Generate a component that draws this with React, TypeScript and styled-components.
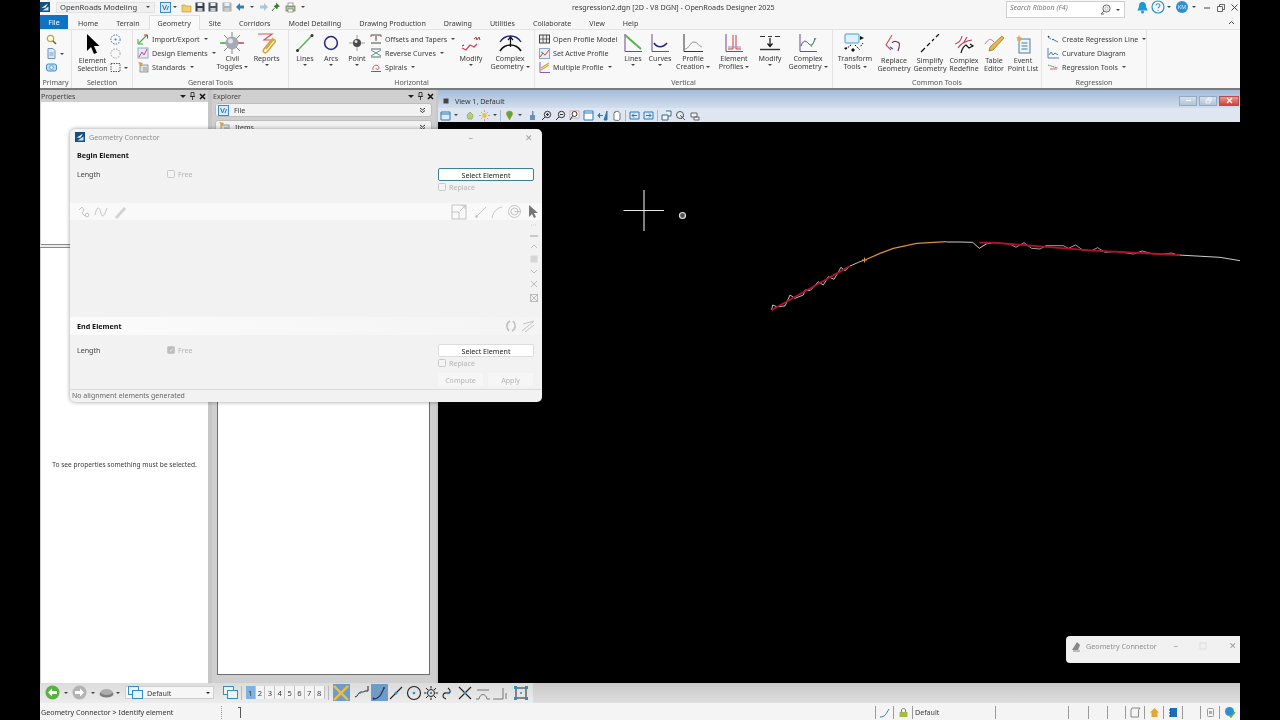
import React from "react";
import styled, { createGlobalStyle } from "styled-components";

const GlobalStyle = createGlobalStyle`
  html, body { margin: 0; padding: 0; background: #000; }
  body { font-family: "Noto Sans", "Liberation Sans", sans-serif; font-size: 7.1px; color: #3a3a3a; }
  * { box-sizing: border-box; }
`;

const Screen = styled.div`
  width: 1280px;
  height: 720px;
  background: #000;
  padding-left: 40px;
  position: relative;
  overflow: hidden;
  filter: blur(0.25px);
`;
const AppWindow = styled.div`
  width: 1200px;
  height: 720px;
  display: flex;
  flex-direction: column;
  background: #f6f6f6;
`;

// icons are drawn in page pixels: viewBox always equals the size
type IcoProps = { $s: number; $h?: number; $ml?: number; $flip?: boolean };
const Ico = styled.svg.attrs<IcoProps>((p) => ({
  viewBox: `0 0 ${p.$s} ${p.$h ?? p.$s}`,
}))<IcoProps>`
  width: ${(p) => p.$s}px;
  height: ${(p) => p.$h ?? p.$s}px;
  flex: none;
  display: block;
  margin-left: ${(p) => p.$ml ?? 0}px;
  transform: ${(p) => (p.$flip ? "scaleX(-1)" : "none")};
`;
const Caret = styled.span<{ $c?: string; $mx?: number; $big?: boolean }>`
  display: inline-block;
  flex: none;
  width: 0;
  height: 0;
  vertical-align: middle;
  margin: 0 ${(p) => p.$mx ?? 0}px;
  border-left: ${(p) => (p.$big ? 3 : 2)}px solid transparent;
  border-right: ${(p) => (p.$big ? 3 : 2)}px solid transparent;
  border-top: ${(p) => (p.$big ? 3 : 2.5)}px solid ${(p) => p.$c ?? "#444"};
`;

/* title bar */
const TitleBar = styled.div`
  height: 14px;
  display: grid;
  grid-template-columns: 532px 1fr auto;
  position: relative;
  z-index: 1;
`;
const QuickAccess = styled.div`
  display: flex;
  align-items: center;
  height: 14px;
`;
const WorkflowSelect = styled.div`
  width: 99px;
  height: 11px;
  margin: 0 3px 0 6px;
  padding: 0 4px 0 3px;
  background: #f0f0f0;
  border: 1px solid #e2e2e2;
  display: flex;
  align-items: center;
  justify-content: space-between;
  font-size: 7.6px;
`;
const QuickSlot = styled.span<{ $w: number }>`
  width: ${(p) => p.$w}px;
  display: flex;
  justify-content: center;
  align-items: center;
`;
const DocTitle = styled.div`
  font-size: 7.2px;
  line-height: 14px;
  white-space: nowrap;
`;
const TitleRight = styled.div`
  display: flex;
  align-items: flex-start;
  width: 234px;
`;
const SearchBox = styled.div`
  width: 119px;
  height: 17px;
  margin-top: 1px;
  background: #fff;
  border: 1px solid #cfcfcf;
  display: flex;
  align-items: flex-start;
  font-style: italic;
  color: #777;
  padding: 1px 0 0 3px;
  font-size: 7px;
  justify-content: space-between;
`;
const SearchTail = styled.span`
  display: flex;
  align-items: center;
  gap: 5px;
  padding-right: 4px;
  height: 13px;
`;
const TopIconRow = styled.div`
  display: flex;
  align-items: center;
  height: 14px;
  margin-left: 11px;
  gap: 2px;
`;
const Avatar = styled.span`
  width: 12px;
  height: 12px;
  margin: 0 2px 0 3px;
  border-radius: 50%;
  background: #2f8fd0;
  color: #d8eefa;
  font-size: 5.5px;
  display: flex;
  align-items: center;
  justify-content: center;
`;

/* tabs */
const TabRow = styled.div`
  height: 16px;
  display: flex;
  align-items: stretch;
  padding-top: 1px;
  border-bottom: 1px solid #e4e4e4;
`;
const FileTab = styled.div`
  width: 28px;
  margin-right: 1px;
  background: #0f72c4;
  color: #fff;
  display: flex;
  align-items: center;
  justify-content: center;
`;
const Tab = styled.div<{ $active?: boolean }>`
  padding: 0 8px;
  display: flex;
  align-items: center;
  white-space: nowrap;
  background: ${(p) => (p.$active ? "#f9f9f9" : "transparent")};
  border: 1px solid ${(p) => (p.$active ? "#e0e0e0" : "transparent")};
  border-bottom: none;
  margin-bottom: ${(p) => (p.$active ? "-1px" : "0")};
`;
const Collapse = styled.div`
  margin-left: auto;
  padding-right: 5px;
  display: flex;
  align-items: center;
`;

/* ribbon */
const Ribbon = styled.div`
  height: 60px;
  display: flex;
  background: #f8f8f8;
  border-bottom: 2px solid #7b7b7b;
`;
const Group = styled.section<{ $w: number }>`
  width: ${(p) => p.$w}px;
  display: flex;
  flex-direction: column;
  border-right: 1px solid #e3e3e3;
`;
const GroupBody = styled.div<{ $pad?: number }>`
  flex: 1;
  display: flex;
  padding: 2px 0 0 ${(p) => p.$pad ?? 0}px;
  min-height: 0;
`;
const GroupLabel = styled.div`
  height: 11px;
  line-height: 10px;
  text-align: center;
  color: #555;
`;
const LargeTool = styled.div<{ $w: number }>`
  width: ${(p) => p.$w}px;
  display: flex;
  flex-direction: column;
  align-items: center;
  white-space: nowrap;
`;
const ToolIcon = styled.div<{ $h?: number }>`
  height: ${(p) => p.$h ?? 22}px;
  display: flex;
  align-items: center;
  justify-content: center;
`;
const ToolLabel = styled.div`
  text-align: center;
  line-height: 8px;
`;
const ToolCaret = styled.div`
  height: 6px;
  display: flex;
  align-items: center;
`;
const SmallList = styled.div<{ $w: number }>`
  width: ${(p) => p.$w}px;
  display: flex;
  flex-direction: column;
`;
const SmallRow = styled.div`
  height: 14px;
  display: flex;
  align-items: center;
  gap: 3px;
  white-space: nowrap;
`;
const RowText = styled.span`
  margin-right: 1px;
`;
const IconStack = styled.div<{ $w: number }>`
  width: ${(p) => p.$w}px;
  display: flex;
  flex-direction: column;
  align-items: flex-start;
  gap: 3px;
  padding-top: 2px;
`;
const StackRow = styled.div`
  height: 11px;
  display: flex;
  align-items: center;
  gap: 3px;
`;

/* docked panels */
const Main = styled.div`
  flex: 1;
  display: flex;
  min-height: 0;
  background: #c6c6c6;
`;
const Panel = styled.div<{ $w: number }>`
  width: ${(p) => p.$w}px;
  display: flex;
  flex-direction: column;
  background: #cfcfcf;
  margin-right: ${(p) => (p.$w > 200 ? 2 : 4)}px;
`;
const PanelHead = styled.div`
  height: 12px;
  flex: none;
  display: flex;
  align-items: center;
  justify-content: space-between;
  padding: 0 2px 0 1px;
  color: #444;
`;
const PanelTools = styled.div`
  display: flex;
  align-items: center;
  gap: 4px;
`;
const PropTop = styled.div`
  height: 143px;
  flex: none;
  margin-left: 1px;
  background: #fff;
  border-bottom: 1px solid #8a8a8a;
`;
const PropSplit = styled.div`
  height: 3px;
  flex: none;
  background: #ececec;
  border-bottom: 1px solid #8a8a8a;
`;
const PropBody = styled.div`
  flex: 1;
  margin-left: 1px;
  background: #fff;
  display: flex;
  align-items: center;
  justify-content: center;
  padding-bottom: 2px;
  font-size: 6.6px;
`;
const ExplorerBody = styled.div`
  flex: 1;
  display: flex;
  flex-direction: column;
  gap: 3px;
  padding: 1px 4px 0 3px;
  min-height: 0;
`;
const Accordion = styled.div`
  height: 14px;
  flex: none;
  background: #f2f2f2;
  border: 1px solid #bdbdbd;
  border-radius: 3px;
  display: flex;
  align-items: center;
  gap: 5px;
  padding: 0 5px 0 2px;
`;
const Grow = styled.span`
  flex: 1;
`;
const ExplorerList = styled.div`
  flex: 1;
  margin: 0 2px 8px;
  background: #fff;
  border: 1px solid #6d6d6d;
`;

/* view window */
const ViewWin = styled.div`
  flex: 1;
  display: flex;
  flex-direction: column;
  min-width: 0;
`;
const ViewTitle = styled.div`
  height: 18px;
  flex: none;
  padding: 3px 1px 0 5px;
  display: flex;
  align-items: center;
  gap: 6px;
  background: linear-gradient(#a3bcd9, #d2deed);
  color: #333;
`;
const ViewButtons = styled.div`
  margin-left: auto;
  display: flex;
  gap: 2px;
`;
const WinBtn = styled.span<{ $red?: boolean }>`
  width: ${(p) => (p.$red ? 20 : 18)}px;
  height: 10px;
  border: 1px solid ${(p) => (p.$red ? "#b05050" : "#93a9c2")};
  background: ${(p) => (p.$red ? "linear-gradient(#e89a90,#c9433a)" : "linear-gradient(#d5e0ec,#b2c4d8)")};
  display: flex;
  align-items: center;
  justify-content: center;
`;
const ViewTools = styled.div`
  height: 14px;
  flex: none;
  display: flex;
  align-items: center;
  gap: 3px;
  padding-left: 2px;
  background: #dde6f1;
`;
const ToolSep = styled.span`
  width: 1px;
  height: 11px;
  background: #a9b6c6;
`;
const Canvas = styled.div`
  flex: 1;
  background: #000;
  min-height: 0;
`;
const CanvasLayer = styled.svg`
  display: block;
  width: 802px;
  height: 560px;
`;

/* bottom */
const BottomBar = styled.div`
  height: 20px;
  flex: none;
  display: flex;
  align-items: center;
  background: linear-gradient(#c9c9c9, #dedede);
`;
const BottomStrip = styled.div`
  width: 493px;
  height: 20px;
  display: flex;
  align-items: center;
  padding: 0 0 1px 5px;
  background: linear-gradient(#dcdcdc, #ececec);
`;
const ModelSelect = styled.div`
  width: 90px;
  height: 13px;
  margin: 0 9px 0 3px;
  padding: 0 3px 0 2px;
  background: #f6f6f6;
  border: 1px solid #cfcfcf;
  display: flex;
  align-items: center;
  gap: 4px;
`;
const ViewNumber = styled.span<{ $on?: boolean }>`
  width: 10px;
  height: 13px;
  display: flex;
  align-items: center;
  justify-content: center;
  font-size: 7.6px;
  background: ${(p) => (p.$on ? "#7fb2de" : "#f4f4f4")};
  border-right: 1px solid #c2c2c2;
`;
const SnapBtn = styled.span<{ $on?: boolean; $w?: number; $ml?: number }>`
  width: ${(p) => p.$w ?? 17.5}px;
  height: 17px;
  margin-left: ${(p) => p.$ml ?? 0}px;
  display: flex;
  align-items: center;
  justify-content: center;
  background: ${(p) => (p.$on ? "#6f9cc6" : "transparent")};
`;
const StripSep = styled.span`
  width: 1px;
  height: 14px;
  background: #b9b9b9;
  margin: 0 4px 0 3px;
`;
const StatusBar = styled.div`
  height: 17px;
  flex: none;
  display: flex;
  align-items: center;
  background: #f4f4f4;
  padding: 1px 0 0 1px;
  font-size: 7.1px;
`;
const StatusMsg = styled.div`
  width: 181px;
  height: 13px;
  display: flex;
  align-items: center;
  border-right: 1px dotted #999;
  color: #333;
  white-space: nowrap;
`;
const StatusPrompt = styled.div`
  margin-left: 16px;
  width: 3px;
  height: 11px;
  border-right: 1px solid #555;
  border-top: 1px solid #555;
`;
const StatusCells = styled.div`
  margin-left: auto;
  display: flex;
  height: 13px;
`;
const StatusCell = styled.div<{ $w: number }>`
  width: ${(p) => p.$w}px;
  border-left: 1px solid #9a9a9a;
  display: flex;
  align-items: center;
  padding-left: ${(p) => (p.$w > 60 ? 2 : 0)}px;
  justify-content: ${(p) => (p.$w > 60 ? "flex-start" : "center")};
`;

/* floating dialog */
const Dialog = styled.div`
  position: absolute;
  left: 70px;
  top: 129px;
  width: 472px;
  height: 273px;
  background: #f2f2f3;
  border-radius: 5px;
  box-shadow: 0 0 4px rgba(0, 0, 0, 0.4);
  display: flex;
  flex-direction: column;
  overflow: hidden;
`;
const DialogTitle = styled.div`
  height: 18px;
  flex: none;
  display: flex;
  align-items: center;
  padding: 0 9px 2px 5px;
  gap: 4px;
  color: #8d8d8d;
  font-size: 7.2px;
`;
const DialogWinBtn = styled.span<{ $gap?: number }>`
  color: #9b9b9b;
  font-size: 9px;
  margin-left: ${(p) => p.$gap ?? 0}px;
`;
const SectionHead = styled.div<{ $band?: boolean; $h: number }>`
  height: ${(p) => p.$h}px;
  flex: none;
  display: flex;
  align-items: center;
  padding: 0 7px;
  font-weight: 700;
  font-size: 7.2px;
  color: #111;
  background: ${(p) => (p.$band ? "linear-gradient(90deg,#fbfbfb,#f4f4f5)" : "transparent")};
`;
const HeadIcons = styled.div`
  margin-left: auto;
  display: flex;
  align-items: center;
  gap: 3px;
`;
const FieldGrid = styled.div<{ $h: number; $top: number }>`
  height: ${(p) => p.$h}px;
  flex: none;
  display: grid;
  grid-template-columns: 90px 1fr 96px;
  padding: ${(p) => p.$top}px 8px 0 7px;
  align-content: start;
`;
const FieldLabel = styled.span`
  line-height: 10px;
  color: #444;
`;
const Check = styled.label`
  display: flex;
  align-items: flex-start;
  gap: 3px;
  color: #b4b4b4;
  line-height: 9px;
  height: 10px;
  margin-top: 1px;
`;
const CheckBox = styled.span<{ $on?: boolean }>`
  width: 8px;
  height: 8px;
  flex: none;
  border: 1px solid #c8c8c8;
  border-radius: 1.5px;
  background: ${(p) => (p.$on ? "#bdbdbd" : "#f4f4f4")};
  color: #eee;
  font-size: 6px;
  line-height: 6px;
  text-align: center;
`;
const RightCol = styled.div`
  display: flex;
  flex-direction: column;
  gap: 1px;
  margin-top: -1px;
`;
const SelectBtn = styled.button<{ $focus?: boolean }>`
  width: 96px;
  height: 13px;
  padding: 0;
  font: inherit;
  color: #222;
  background: #fff;
  border: 1px solid ${(p) => (p.$focus ? "#3f7f92" : "#dcdcdc")};
  border-radius: 2px;
`;
const ActionRow = styled.div`
  display: flex;
  gap: 5px;
  margin-top: 3px;
`;
const GhostBtn = styled.span`
  width: 45px;
  height: 13px;
  background: #f6f6f6;
  color: #b5b5b5;
  display: flex;
  align-items: center;
  justify-content: center;
`;
const ToolBand = styled.div`
  height: 17px;
  flex: none;
  display: flex;
  align-items: center;
  padding: 0 4px 0 8px;
  background: #f9f9f9;
`;
const ListArea = styled.div`
  flex: 1;
  display: flex;
  justify-content: flex-end;
  padding: 2px 3px 0 0;
`;
const SideIcons = styled.div`
  width: 11px;
  display: flex;
  flex-direction: column;
  align-items: center;
  gap: 6px;
`;
const DialogStatus = styled.div`
  height: 13px;
  flex: none;
  border-top: 1px solid #dcdcdc;
  padding-left: 2px;
  line-height: 12px;
  color: #666;
  font-size: 7px;
`;
const TaskPreview = styled.div`
  position: absolute;
  left: 1066px;
  top: 636px;
  width: 174px;
  height: 27px;
  background: #f1f1f1;
  border-radius: 4px 0 0 4px;
  display: flex;
  align-items: center;
  gap: 4px;
  padding: 0 3px 8px 4px;
  color: #8f8f8f;
  font-size: 7.2px;
`;

/* ---- icons ---- */
const AppLogo = () => (
  <Ico $s={10}>
    <rect width="10" height="10" fill="#12517f" />
    <path d="M1.500 6L8 1.500 5.500 5.500z" fill="#fff" />
    <path d="M2.500 8.500L8.500 4.500v4z" fill="#cfe3f2" />
  </Ico>
);
const CubeIcon = () => (
  <Ico $s={11}>
    <rect x=".5" y=".5" width="10" height="10" fill="#dcebf7" stroke="#3b8ccb" />
    <path d="M2.500 3l2 5 2-5M7 8l1.500-4" stroke="#2f78b5" fill="none" />
  </Ico>
);
const FolderIcon = () => (
  <Ico $s={11}>
    <path d="M1 3h3l1 1h5v6H1z" fill="#f1cf6a" stroke="#b8912e" strokeWidth=".6" />
  </Ico>
);
const SaveIcon = ({ c = "#2c3e50" }: { c?: string }) => (
  <Ico $s={10}>
    <path d="M.5.5h8l1 1v8H.5z" fill={c} />
    <rect x="2.500" y="1" width="5" height="3" fill="#eee" />
    <rect x="2.500" y="6" width="5" height="3.500" fill="#ccc" />
  </Ico>
);
const UndoIcon = ({ c, flip }: { c: string; flip?: boolean }) => (
  <Ico $s={10} $flip={flip}>
    <path d="M1 5l4-4v2.500h4v3H5V9z" fill={c} />
  </Ico>
);
const PinIcon = () => (
  <Ico $s={10}>
    <path d="M5 .5l4 4-2 .5-1 2.500L2.500 4 5 3z" fill="#3d7a35" />
    <path d="M3.500 6L1 9" stroke="#3d7a35" />
  </Ico>
);
const PrintIcon = () => (
  <Ico $s={11}>
    <rect x="1" y="4" width="9" height="5" fill="#b9c9a0" stroke="#5f6f4b" strokeWidth=".7" />
    <rect x="3" y="1" width="5" height="3" fill="#fff" stroke="#666" strokeWidth=".6" />
    <rect x="3" y="7" width="5" height="3" fill="#fff" stroke="#666" strokeWidth=".6" />
  </Ico>
);
const BellIcon = () => (
  <Ico $s={13}>
    <path d="M6.500 1c3 0 3.600 2.500 3.600 5l1.600 3.500H1.300L2.900 6c0-2.500.6-5 3.600-5z" fill="#1c9ad6" />
    <circle cx="6.500" cy="11" r="1.500" fill="#1c9ad6" />
  </Ico>
);
const HelpIcon = () => (
  <Ico $s={14}>
    <circle cx="7" cy="7" r="6" fill="#fff" stroke="#2f8fd0" strokeWidth="1.200" />
    <path d="M5 5.500c0-2.400 4-2.400 4 0 0 1.600-2 1.500-2 3M7 10v1" stroke="#2f8fd0" strokeWidth="1.100" fill="none" />
  </Ico>
);
const SearchIcon = () => (
  <Ico $s={11}>
    <circle cx="6.500" cy="4.500" r="3.600" fill="none" stroke="#666" />
    <circle cx="6.500" cy="4.500" r="1.600" fill="none" stroke="#999" strokeWidth=".7" />
    <path d="M3.800 7L1 10h3" stroke="#666" fill="none" />
  </Ico>
);
const ElementArrow = () => (
  <Ico $s={14} $h={21}>
    <path d="M1 0v17l4-4 3 7 3-1.300-3-6.700h5.500z" fill="#000" />
  </Ico>
);
const DotCircle = ({ dash }: { dash?: boolean }) => (
  <Ico $s={11}>
    <circle cx="5.500" cy="5.500" r="4.600" fill="none" stroke={dash ? "#999" : "#2e6f9e"} strokeDasharray="1.500 1.200" />
    {!dash && <circle cx="5.500" cy="5.500" r="1" fill="#2e6f9e" />}
  </Ico>
);
const DashRect = () => (
  <Ico $s={11}>
    <rect x="1" y="1.500" width="9" height="8" fill="none" stroke="#555" strokeDasharray="1.500 1" />
  </Ico>
);
const PrimaryGlass = () => (
  <Ico $s={11}>
    <circle cx="4.500" cy="4.500" r="3.200" fill="none" stroke="#c9a43a" strokeWidth="1.200" />
    <path d="M7 7l3 3" stroke="#6d5a1e" strokeWidth="1.400" />
  </Ico>
);
const PrimaryDoc = () => (
  <Ico $s={11}>
    <path d="M2 .5h5l2 2v8H2z" fill="#dbe7f4" stroke="#6f93bb" />
    <path d="M3.500 5h4M3.500 7h4" stroke="#5a83b0" strokeWidth=".7" />
  </Ico>
);
const PrimaryTag = () => (
  <Ico $s={11}>
    <rect x=".5" y="2" width="10" height="7" rx="2" fill="#bcdcf3" stroke="#3b8ccb" />
    <circle cx="5.500" cy="5.500" r="1.800" fill="#fff" stroke="#2f78b5" strokeWidth=".7" />
  </Ico>
);
const CivilToggles = () => (
  <Ico $s={24} $h={22}>
    <path d="M12 0v22M1 11h22M4 3l16 16M20 3L4 19" stroke="#777" strokeWidth=".9" />
    <path d="M18 11h6" stroke="#d33" strokeWidth="1.200" />
    <path d="M0 11h6" stroke="#3a3" strokeWidth="1.200" />
    <circle cx="12" cy="11" r="6.500" fill="#a9a9b3" />
    <circle cx="10.500" cy="9" r="2.500" fill="#e2e2e8" />
  </Ico>
);
const ReportsIcon = () => (
  <Ico $s={20} $h={22}>
    <path d="M1 2h14L7 8h9l-6 6" fill="none" stroke="#d6556d" strokeWidth="1.200" />
    <path d="M16 6l-9 11c-2 3 1 5 3 3l8-10c1-2-1-3-2-2l-7 9" fill="none" stroke="#d5a93a" strokeWidth="1.600" />
  </Ico>
);
const LinesIcon = () => (
  <Ico $s={20}>
    <path d="M2.500 17.500L17 2.500" stroke="#5fb65a" strokeWidth="1.600" />
    <circle cx="2.500" cy="17.500" r="1.500" fill="#333" />
    <circle cx="17" cy="2.500" r="1.500" fill="#333" />
  </Ico>
);
const ArcsIcon = () => (
  <Ico $s={16}>
    <circle cx="8" cy="8" r="6.400" fill="none" stroke="#23237f" strokeWidth="1.500" />
  </Ico>
);
const PointIcon = () => (
  <Ico $s={16}>
    <path d="M8 0v16M0 8h16" stroke="#888" strokeWidth=".8" />
    <circle cx="8" cy="8" r="4" fill="#4a4a4a" />
    <circle cx="7" cy="6.500" r="1.500" fill="#ddd" />
  </Ico>
);
const OffsetIcon = () => (
  <Ico $s={12} $h={11}>
    <path d="M1 1h10M1 9h10M6 2v5" stroke="#333" strokeWidth=".9" />
    <path d="M1 1v2M11 1v2" stroke="#c33" />
  </Ico>
);
const ReverseIcon = () => (
  <Ico $s={12} $h={11}>
    <path d="M1 1h10M1 9h10" stroke="#345" strokeWidth=".8" />
    <path d="M1 8l10-6M1 2l10 6" stroke="#2f7f5f" strokeWidth=".8" />
  </Ico>
);
const SpiralIcon = () => (
  <Ico $s={12} $h={11}>
    <path d="M1 9.500h10" stroke="#345" strokeWidth=".8" />
    <path d="M3 8c-1-6 6-6 6-2 0 2-3 2-3 0" fill="none" stroke="#b33" strokeWidth=".8" />
  </Ico>
);
const HModifyIcon = () => (
  <Ico $s={21} $h={18}>
    <path d="M1 14l4 2 4-5 4 2 3-3" fill="none" stroke="#d6425a" strokeWidth="1.300" />
    <path d="M13 5l2-2 1 3 2-3 1 3" fill="none" stroke="#b33" strokeWidth="1" />
    <path d="M1 12l2-1" stroke="#333" />
  </Ico>
);
const HComplexIcon = () => (
  <Ico $s={23} $h={20}>
    <path d="M1 9C6 1 17 1 22 9" fill="none" stroke="#23237f" strokeWidth="1.300" />
    <path d="M1 18C6 10 17 10 22 18" fill="none" stroke="#111" strokeWidth="1.600" />
    <path d="M11.500 14V5M9 7l2.500-3L14 7" fill="none" stroke="#111" strokeWidth="1.200" />
  </Ico>
);
const GridIcon = () => (
  <Ico $s={11} $h={10}>
    <rect x=".5" y="1" width="10" height="8" fill="#eee" stroke="#444" />
    <path d="M4 1v8M7.500 1v8M.5 5h10" stroke="#444" strokeWidth=".8" />
  </Ico>
);
const ActiveProfileIcon = () => (
  <Ico $s={11}>
    <rect x=".5" y=".5" width="10" height="10" fill="#e8eef8" stroke="#8ea4c8" />
    <path d="M1 9l3-4 2 2 4-5" stroke="#c44" fill="none" />
    <path d="M2 4l2 1" stroke="#3a3" />
  </Ico>
);
const MultiProfileIcon = () => (
  <Ico $s={11}>
    <path d="M1 0v10.500h10" stroke="#8a5fa8" fill="none" />
    <path d="M2 8l8-5M2 6l8-5" stroke="#d9a23a" strokeWidth="1.100" />
  </Ico>
);
const ProfileAxes = () => <path d="M1 0v17.500h17" fill="none" stroke="#6b4d8f" strokeWidth="1" />;
const VLinesIcon = () => (
  <Ico $s={19}>
    <ProfileAxes />
    <path d="M1 1l16 14" stroke="#55b04a" strokeWidth="1.800" />
  </Ico>
);
const VCurvesIcon = () => (
  <Ico $s={19}>
    <ProfileAxes />
    <path d="M3 9c3 5 9 5 13 0" fill="none" stroke="#23237f" strokeWidth="1.500" />
  </Ico>
);
const VCreateIcon = () => (
  <Ico $s={20} $h={19}>
    <path d="M1 0v17.500h19" fill="none" stroke="#333" strokeWidth="1" />
    <path d="M2 15c4 0 5-7 9-7s4 4 8 5" fill="none" stroke="#888" strokeWidth=".9" />
  </Ico>
);
const VElementIcon = () => (
  <Ico $s={19}>
    <ProfileAxes />
    <path d="M8 1v14H3M11 1v14h5" fill="none" stroke="#cc3b3b" strokeWidth="1" />
    <path d="M3 13h13" stroke="#9a8bc0" />
  </Ico>
);
const VModifyIcon = () => (
  <Ico $s={20} $h={17}>
    <path d="M0 1.500h5M8 1.500h4M15 1.500h5" stroke="#333" strokeWidth="1.200" />
    <path d="M10 3v8M7.500 8.500l2.500 3 2.500-3" fill="none" stroke="#111" strokeWidth="1.200" />
    <path d="M0 14.500h20" stroke="#333" strokeWidth="1.400" />
  </Ico>
);
const VComplexIcon = () => (
  <Ico $s={19}>
    <ProfileAxes />
    <path d="M2 12c3-8 6-4 8-2s4 2 6-6" fill="none" stroke="#2e4f9e" strokeWidth="1" />
    <path d="M12 13l5-9" stroke="#5ab04a" strokeWidth="1" />
  </Ico>
);
const TransformIcon = () => (
  <Ico $s={24} $h={20}>
    <rect x="2" y="1" width="14" height="9" rx="1" fill="#dff0fa" stroke="#3ca0cf" />
    <path d="M17 3l4 2-4 2z" fill="#111" />
    <path d="M8 12l-5 4M12 12l5 5M20 10l-3 4" stroke="#111" strokeDasharray="1.500 1" />
    <path d="M1 15l3-1-1 3zM10 15l-2 2 2 2 2-2z" fill="#111" />
  </Ico>
);
const ReplaceIcon = () => (
  <Ico $s={20}>
    <path d="M8 1L2 11l5 5" fill="none" stroke="#d04a5a" strokeWidth="1.100" />
    <path d="M8 9c2-3 6-1 7 0s0 5-1 8" fill="none" stroke="#8a2b5f" strokeWidth="1.200" />
    <path d="M6 13l3 2" stroke="#3358c0" strokeWidth="1.200" />
  </Ico>
);
const SimplifyIcon = () => (
  <Ico $s={20}>
    <path d="M1 18l4-4M7 12l3-3M12 7l2-2M16 3l3-3" stroke="#111" strokeWidth="1.200" />
  </Ico>
);
const RedefineIcon = () => (
  <Ico $s={21}>
    <path d="M1 10c4-1 6-3 7-8M4 14c3-5 7-7 14-8M10 8l3-5" fill="none" stroke="#bb3b50" strokeWidth="1.100" />
    <path d="M7 19c1-4 3-7 5-8l3 3 4-2-3-2" fill="none" stroke="#111" strokeWidth="1.200" />
  </Ico>
);
const TableEditorIcon = () => (
  <Ico $s={21} $h={18}>
    <path d="M1 9c3-5 6-6 9-2" fill="none" stroke="#d8708a" strokeWidth="1" />
    <path d="M18 1l2 2L9 15l-4 1 1-4z" fill="#e6b83f" stroke="#7a5a1c" strokeWidth=".6" />
  </Ico>
);
const EventListIcon = () => (
  <Ico $s={15} $h={19}>
    <rect x="3" y="4" width="11" height="14" fill="#eef5fb" stroke="#4a7ca8" />
    <path d="M5.500 8h6M5.500 11h6M5.500 14h6" stroke="#4a7ca8" />
    <path d="M3 0l1 2.200 2 .3-1.500 1.500.5 2L3 5 1 6l.5-2L0 2.500 2 2.200z" fill="#e9a83a" />
  </Ico>
);
const RegLineIcon = () => (
  <Ico $s={12} $h={10}>
    <path d="M1 3l3 2M7 6l4 2" stroke="#2f7fbf" />
    <circle cx="1.500" cy="2.500" r=".8" fill="#333" />
    <circle cx="6" cy="5.500" r=".8" fill="#333" />
  </Ico>
);
const CurvatureIcon = () => (
  <Ico $s={12} $h={11}>
    <path d="M1 0v10h11" stroke="#5a7fb5" fill="none" />
    <path d="M2 7l2-3 2 3 2-2 3 2" stroke="#2f7fbf" fill="none" />
  </Ico>
);
const RegToolsIcon = () => (
  <Ico $s={12} $h={10}>
    <path d="M1 3l3 1 3 1 4 1" stroke="#777" strokeDasharray="1.500 1" />
    <path d="M3 7h7" stroke="#c66" />
  </Ico>
);
const ImportIcon = () => (
  <Ico $s={12}>
    <path d="M2 10l8-8" stroke="#4a4" strokeWidth="1.100" />
    <path d="M7 2h3.500v3.500" stroke="#c33" fill="none" />
    <path d="M1 6v5h5" stroke="#3a3" fill="none" />
  </Ico>
);
const DesignIcon = () => (
  <Ico $s={12}>
    <rect x="1" y="1" width="10" height="10" fill="#e5ecf6" stroke="#99a9c9" />
    <path d="M2 10l3-5 2 3 3-6" stroke="#c0478a" fill="none" />
  </Ico>
);
const StandardsIcon = () => (
  <Ico $s={12}>
    <rect x="3" y="4" width="8" height="7" fill="#dce3ec" stroke="#777" strokeWidth=".7" />
    <path d="M1 1l5 1-2 4z" fill="#d9a23a" />
    <path d="M6 7h4M6 9h4" stroke="#777" strokeWidth=".7" />
  </Ico>
);
const Chevrons = () => (
  <Ico $s={7} $h={6}>
    <path d="M1 1l2.500 2L6 1M1 3.500l2.500 2L6 3.500" stroke="#333" strokeWidth="1" fill="none" />
  </Ico>
);
const PanelCtl = () => (
  <PanelTools>
    <Caret $c="#222" $big />
    <Ico $s={5} $h={8}>
      <path d="M1 .5h3v4H1zM0 4.500h5M2.500 4.500V8" stroke="#222" strokeWidth=".8" fill="none" />
    </Ico>
    <Ico $s={7}>
      <path d="M1 1l5 5M6 1L1 6" stroke="#111" strokeWidth="1.500" />
    </Ico>
  </PanelTools>
);
const VT_GLYPHS = [
  <path d="M1 2h9v8H1zM1 4h9" fill="#dcebf7" stroke="#2f78b5" />,
  <path d="M2 5l3-3 3 3-1 4H3z" fill="#b9cc7c" stroke="#7f9a3a" strokeWidth=".6" />,
  <g><circle cx="5.500" cy="5.500" r="2.400" fill="#f0c23c" /><path d="M5.500 0v2M5.500 9v2M0 5.500h2M9 5.500h2M2 2l1.200 1.200M8 8l1.200 1.200M9 2L7.800 3.200M2 9l1.200-1.200" stroke="#d99" /></g>,
  <path d="M5.500 1c2.500 0 3.500 2 3 3.500L5.500 10 2.500 4.500C2 3 3 1 5.500 1z" fill="#5aa83c" stroke="#d8892f" strokeWidth=".6" />,
  <path d="M5 1h1.500v4H5zM3 5h5v5H3z" fill="#6d8fb5" />,
  <g><circle cx="6.500" cy="4.500" r="3.200" fill="none" stroke="#333" /><path d="M4 7l-3 3M5 4.500h3M6.500 3v3" stroke="#333" /></g>,
  <g><circle cx="6.500" cy="4.500" r="3.200" fill="none" stroke="#333" /><path d="M4 7l-3 3M5 4.500h3" stroke="#333" /></g>,
  <g><rect x="1" y="1" width="9" height="7" fill="#fff" stroke="#b66" strokeWidth=".5" /><circle cx="5.500" cy="4" r="2.500" fill="none" stroke="#333" /><path d="M3.500 6L1 10" stroke="#333" /></g>,
  <path d="M1 1h9v9H1zM1 3h9" fill="#fff" stroke="#2f78b5" />,
  <path d="M10 1v9H7zM6 5.500l-5 0M3 3L1 5.500 3 8" fill="#2f78b5" stroke="#2f78b5" />,
  <path d="M3 10V4c0-2 1-2 1-1V2c0-1 2-1 2 0 0-1 2-1 2 .5l1 1V8c0 2-1 2.500-2 2.500z" fill="#fff" stroke="#444" strokeWidth=".7" />,
  <path d="M1 2h9v7H1zM3 5.500h5M5 3.500L3 5.500l2 2" fill="#dcebf7" stroke="#2f78b5" />,
  <path d="M1 2h9v7H1zM3 5.500h5M6 3.500l2 2-2 2" fill="#dcebf7" stroke="#2f78b5" />,
  <path d="M1 5h6v5H1zM5 1h5v5H7" fill="#eef5fb" stroke="#44648a" />,
  <g><circle cx="5" cy="5" r="3.500" fill="#e6eef6" stroke="#555" /><path d="M5 5l5 5M9 6L6 9" stroke="#c33" /></g>,
  <path d="M2 3h6v4H2zM5 7h5v3H5z" fill="#eef5fb" stroke="#666" />,
];
const VT = ({ i, ml }: { i: number; ml?: number }) => (
  <Ico $s={11} $ml={ml}>{VT_GLYPHS[i]}</Ico>
);

const BackIcon = ({ c, flip }: { c: string; flip?: boolean }) => (
  <Ico $s={15} $flip={flip}>
    <circle cx="7.500" cy="7.500" r="7" fill={c} />
    <path d="M3 7.500l4-4v2.500h5v3H7v2.500z" fill="#fff" />
  </Ico>
);
const StackIcon = () => (
  <Ico $s={15} $h={11}>
    <ellipse cx="7.500" cy="7" rx="7" ry="3.500" fill="#7d7d7d" />
    <ellipse cx="7.500" cy="5" rx="6" ry="3" fill="#adadad" />
  </Ico>
);
const ModelsIcon = () => (
  <Ico $s={15} $h={13}>
    <rect x=".5" y=".5" width="10" height="8" fill="#eaf4fb" stroke="#2f8fc0" />
    <rect x="4.500" y="4.500" width="10" height="8" fill="#eaf4fb" stroke="#2f8fc0" />
  </Ico>
);
const SNAP_GLYPHS = [
  <path d="M1 1l14 14M15 1L1 15" stroke="#f2c037" strokeWidth="2.400" />,
  <g><path d="M1 12c3 0 3-5 6-5s2 0 4-1l3 0V1" fill="none" stroke="#223" strokeWidth="1" /><circle cx="6" cy="8" r="1" fill="#2f8fc0" /></g>,
  <g><path d="M2 14c6 0 8-4 11-11" fill="none" stroke="#1e3a5f" strokeWidth="1.200" /><circle cx="2.500" cy="13.500" r="1" fill="#1e3a5f" /><circle cx="13" cy="3" r="1" fill="#1e3a5f" /></g>,
  <g><path d="M2 14L14 2" stroke="#222" strokeWidth="1.100" /><circle cx="8" cy="8" r="1.500" fill="#2f8fc0" /></g>,
  <g><circle cx="8" cy="8" r="6.500" fill="none" stroke="#222" strokeWidth="1.100" /><circle cx="8" cy="8" r="1.300" fill="#2f8fc0" /></g>,
  <g><circle cx="8" cy="8" r="3.500" fill="none" stroke="#222" /><circle cx="8" cy="8" r="1.200" fill="#2f8fc0" /><path d="M8 1v2.500M8 12.500V15M1 8h2.500M12.500 8H15M3 3l2 2M11 11l2 2M13 3l-2 2M5 11l-2 2" stroke="#222" /></g>,
  <g><path d="M6 14c-5-2-3-7 1-6s4-3 1-5" fill="none" stroke="#222" strokeWidth="1.100" /><circle cx="8" cy="8" r="1.200" fill="#2f8fc0" /></g>,
  <g><path d="M2 2l12 12M14 2L2 14" stroke="#222" strokeWidth="1.100" /><circle cx="8" cy="8" r="1.200" fill="#2f8fc0" /></g>,
  <path d="M1 14h3c1-6 7-6 8 0h3M2 5h12" fill="none" stroke="#777" strokeWidth="1" />,
  <path d="M1 14h10V3M14 14V8" fill="none" stroke="#777" strokeWidth="1" />,
  <g><rect x="3" y="3" width="10" height="10" fill="none" stroke="#222" /><path d="M1 1h3v3H1zM12 1h3v3h-3zM1 12h3v3H1zM12 12h3v3h-3z" fill="#2f8fc0" /><circle cx="8" cy="8" r="1" fill="#2f8fc0" /></g>,
];
const Snap = ({ i }: { i: number }) => <Ico $s={16}>{SNAP_GLYPHS[i]}</Ico>;
const Dim = ({ children }: { children: React.ReactNode }) => (
  <g stroke="#bdbdbd" fill="none" strokeWidth=".9">
    {children}
  </g>
);

/* ---- data ---- */
const TABS = ["Home", "Terrain", "Geometry", "Site", "Corridors", "Model Detailing", "Drawing Production", "Drawing", "Utilities", "Collaborate", "View", "Help"];

// vertices read off the picture at 3x, with the origin of each crop
const crop = (pts: number[][], ox: number, oy: number) =>
  pts.map(([x, y]) => `${ox + x / 3},${oy + y / 3}`).join(" ");
const LEFT_RAW = crop([[35, 240], [38, 225], [50, 230], [75, 228], [90, 195], [105, 205], [130, 195], [135, 180], [150, 182], [175, 155], [190, 165], [205, 140], [222, 148], [243, 112], [255, 122], [270, 108], [300, 95], [315, 90]], 760, 230);
const ARC = crop([[315, 90], [360, 70], [400, 55], [470, 40], [560, 35]], 760, 230);
const MID_RAW = crop([[-40, 36], [0, 36], [38, 37], [58, 55], [78, 42]], 960, 230);
const RIGHT_RAW = crop([[78, 42], [100, 38], [150, 42], [168, 52], [192, 38], [215, 55], [240, 57], [258, 47], [310, 47], [325, 55], [347, 45], [368, 60], [395, 62], [413, 53], [435, 67], [470, 64], [520, 72], [547, 63], [575, 71], [610, 72], [635, 69], [655, 76]], 960, 230);
const TAIL = crop([[655, 75], [780, 82], [840, 92]], 960, 230);
const RED_LEFT = crop([[35, 240], [270, 108]], 760, 230);
const RED_RIGHT = crop([[58, 38], [100, 38], [150, 42], [250, 50], [400, 62], [660, 75]], 960, 230);

export default function App() {
  return (
    <>
      <GlobalStyle />
      <Screen>
        <AppWindow>
          <TitleBar>
            <QuickAccess>
              <AppLogo />
              <WorkflowSelect>
                OpenRoads Modeling
                <Caret />
              </WorkflowSelect>
              <QuickSlot $w={14}><CubeIcon /></QuickSlot>
              <QuickSlot $w={6}><Caret /></QuickSlot>
              <QuickSlot $w={16}><FolderIcon /></QuickSlot>
              <QuickSlot $w={12}><SaveIcon /></QuickSlot>
              <QuickSlot $w={14}><SaveIcon c="#4a5560" /></QuickSlot>
              <QuickSlot $w={14}><SaveIcon c="#aab0b6" /></QuickSlot>
              <QuickSlot $w={12}><UndoIcon c="#2e7fc0" /></QuickSlot>
              <QuickSlot $w={12}><Caret /></QuickSlot>
              <QuickSlot $w={11}><UndoIcon c="#a9c6de" flip /></QuickSlot>
              <QuickSlot $w={14}><PinIcon /></QuickSlot>
              <QuickSlot $w={14}><PrintIcon /></QuickSlot>
              <QuickSlot $w={12}><Caret /></QuickSlot>
            </QuickAccess>
            <DocTitle>resgression2.dgn [2D - V8 DGN] - OpenRoads Designer 2025</DocTitle>
            <TitleRight>
              <SearchBox>
                Search Ribbon (F4)
                <SearchTail>
                  <SearchIcon />
                  <Caret />
                </SearchTail>
              </SearchBox>
              <TopIconRow>
                <BellIcon />
                <HelpIcon />
                <Caret />
                <Avatar>KM</Avatar>
                <Caret />
                <Ico $s={9} $ml={4}><path d="M2 5h6" stroke="#444" /></Ico>
                <Ico $s={9} $ml={3}><path d="M1.500 3.500h5v5h-5zM3.500 3.500V1.500h5v5h-2" fill="none" stroke="#444" strokeWidth=".8" /></Ico>
                <Ico $s={9} $ml={3}><path d="M1.500 1.500l6 6M7.500 1.500l-6 6" stroke="#444" /></Ico>
              </TopIconRow>
            </TitleRight>
          </TitleBar>

          <TabRow>
            <FileTab>File</FileTab>
            {TABS.map((t) => (
              <Tab key={t} $active={t === "Geometry"}>{t}</Tab>
            ))}
            <Collapse>
              <Ico $s={7} $h={5}><path d="M1 4l2.500-2.500L6 4" stroke="#444" fill="none" /></Ico>
            </Collapse>
          </TabRow>

          <Ribbon>
            <Group $w={32}>
              <GroupBody $pad={6}>
                <IconStack $w={26}>
                  <StackRow><PrimaryGlass /></StackRow>
                  <StackRow><PrimaryDoc /><Caret /></StackRow>
                  <StackRow><PrimaryTag /></StackRow>
                </IconStack>
              </GroupBody>
              <GroupLabel>Primary</GroupLabel>
            </Group>
            <Group $w={61}>
              <GroupBody $pad={3}>
                <LargeTool $w={35}>
                  <ToolIcon $h={24}><ElementArrow /></ToolIcon>
                  <ToolLabel>Element<br />Selection</ToolLabel>
                </LargeTool>
                <IconStack $w={22}>
                  <StackRow><DotCircle /></StackRow>
                  <StackRow><DotCircle dash /></StackRow>
                  <StackRow><DashRect /><Caret /></StackRow>
                </IconStack>
              </GroupBody>
              <GroupLabel>Selection</GroupLabel>
            </Group>
            <Group $w={156}>
              <GroupBody $pad={4}>
                <SmallList $w={85}>
                  <SmallRow><ImportIcon /><RowText>Import/Export</RowText><Caret /></SmallRow>
                  <SmallRow><DesignIcon /><RowText>Design Elements</RowText><Caret /></SmallRow>
                  <SmallRow><StandardsIcon /><RowText>Standards</RowText><Caret /></SmallRow>
                </SmallList>
                <LargeTool $w={26}>
                  <ToolIcon><CivilToggles /></ToolIcon>
                  <ToolLabel>Civil<br />Toggles <Caret /></ToolLabel>
                </LargeTool>
                <LargeTool $w={44}>
                  <ToolIcon><ReportsIcon /></ToolIcon>
                  <ToolLabel>Reports</ToolLabel>
                  <ToolCaret><Caret /></ToolCaret>
                </LargeTool>
              </GroupBody>
              <GroupLabel>General Tools</GroupLabel>
            </Group>
            <Group $w={246}>
              <GroupBody $pad={3}>
                <LargeTool $w={26}>
                  <ToolIcon><LinesIcon /></ToolIcon>
                  <ToolLabel>Lines</ToolLabel>
                  <ToolCaret><Caret /></ToolCaret>
                </LargeTool>
                <LargeTool $w={26}>
                  <ToolIcon><ArcsIcon /></ToolIcon>
                  <ToolLabel>Arcs</ToolLabel>
                  <ToolCaret><Caret /></ToolCaret>
                </LargeTool>
                <LargeTool $w={26}>
                  <ToolIcon><PointIcon /></ToolIcon>
                  <ToolLabel>Point</ToolLabel>
                  <ToolCaret><Caret /></ToolCaret>
                </LargeTool>
                <SmallList $w={86}>
                  <SmallRow><OffsetIcon /><RowText>Offsets and Tapers</RowText><Caret /></SmallRow>
                  <SmallRow><ReverseIcon /><RowText>Reverse Curves</RowText><Caret /></SmallRow>
                  <SmallRow><SpiralIcon /><RowText>Spirals</RowText><Caret /></SmallRow>
                </SmallList>
                <LargeTool $w={30}>
                  <ToolIcon><HModifyIcon /></ToolIcon>
                  <ToolLabel>Modify</ToolLabel>
                  <ToolCaret><Caret /></ToolCaret>
                </LargeTool>
                <LargeTool $w={48}>
                  <ToolIcon><HComplexIcon /></ToolIcon>
                  <ToolLabel>Complex<br />Geometry <Caret /></ToolLabel>
                </LargeTool>
              </GroupBody>
              <GroupLabel>Horizontal</GroupLabel>
            </Group>
            <Group $w={298}>
              <GroupBody $pad={4}>
                <SmallList $w={81}>
                  <SmallRow><GridIcon /><RowText>Open Profile Model</RowText></SmallRow>
                  <SmallRow><ActiveProfileIcon /><RowText>Set Active Profile</RowText></SmallRow>
                  <SmallRow><MultiProfileIcon /><RowText>Multiple Profile</RowText><Caret /></SmallRow>
                </SmallList>
                <LargeTool $w={26}>
                  <ToolIcon><VLinesIcon /></ToolIcon>
                  <ToolLabel>Lines</ToolLabel>
                  <ToolCaret><Caret /></ToolCaret>
                </LargeTool>
                <LargeTool $w={28}>
                  <ToolIcon><VCurvesIcon /></ToolIcon>
                  <ToolLabel>Curves</ToolLabel>
                  <ToolCaret><Caret /></ToolCaret>
                </LargeTool>
                <LargeTool $w={38}>
                  <ToolIcon><VCreateIcon /></ToolIcon>
                  <ToolLabel>Profile<br />Creation <Caret /></ToolLabel>
                </LargeTool>
                <LargeTool $w={44}>
                  <ToolIcon><VElementIcon /></ToolIcon>
                  <ToolLabel>Element<br />Profiles <Caret /></ToolLabel>
                </LargeTool>
                <LargeTool $w={28}>
                  <ToolIcon><VModifyIcon /></ToolIcon>
                  <ToolLabel>Modify</ToolLabel>
                  <ToolCaret><Caret /></ToolCaret>
                </LargeTool>
                <LargeTool $w={48}>
                  <ToolIcon><VComplexIcon /></ToolIcon>
                  <ToolLabel>Complex<br />Geometry <Caret /></ToolLabel>
                </LargeTool>
              </GroupBody>
              <GroupLabel>Vertical</GroupLabel>
            </Group>
            <Group $w={209}>
              <GroupBody $pad={3}>
                <LargeTool $w={38}>
                  <ToolIcon><TransformIcon /></ToolIcon>
                  <ToolLabel>Transform<br />Tools <Caret /></ToolLabel>
                </LargeTool>
                <LargeTool $w={40}>
                  <ToolIcon $h={24}><ReplaceIcon /></ToolIcon>
                  <ToolLabel>Replace<br />Geometry</ToolLabel>
                </LargeTool>
                <LargeTool $w={32}>
                  <ToolIcon $h={24}><SimplifyIcon /></ToolIcon>
                  <ToolLabel>Simplify<br />Geometry</ToolLabel>
                </LargeTool>
                <LargeTool $w={36}>
                  <ToolIcon $h={24}><RedefineIcon /></ToolIcon>
                  <ToolLabel>Complex<br />Redefine</ToolLabel>
                </LargeTool>
                <LargeTool $w={24}>
                  <ToolIcon $h={24}><TableEditorIcon /></ToolIcon>
                  <ToolLabel>Table<br />Editor</ToolLabel>
                </LargeTool>
                <LargeTool $w={34}>
                  <ToolIcon $h={24}><EventListIcon /></ToolIcon>
                  <ToolLabel>Event<br />Point List</ToolLabel>
                </LargeTool>
              </GroupBody>
              <GroupLabel>Common Tools</GroupLabel>
            </Group>
            <Group $w={105}>
              <GroupBody $pad={5}>
                <SmallList $w={100}>
                  <SmallRow><RegLineIcon /><RowText>Create Regression Line</RowText><Caret /></SmallRow>
                  <SmallRow><CurvatureIcon /><RowText>Curvature Diagram</RowText></SmallRow>
                  <SmallRow><RegToolsIcon /><RowText>Regression Tools</RowText><Caret /></SmallRow>
                </SmallList>
              </GroupBody>
              <GroupLabel>Regression</GroupLabel>
            </Group>
          </Ribbon>

          <Main>
            <Panel $w={168}>
              <PanelHead>Properties<PanelCtl /></PanelHead>
              <PropTop />
              <PropSplit />
              <PropBody>To see properties something must be selected.</PropBody>
            </Panel>
            <Panel $w={224}>
              <PanelHead>Explorer<PanelCtl /></PanelHead>
              <ExplorerBody>
                <Accordion><CubeIcon /><Grow>File</Grow><Chevrons /></Accordion>
                <Accordion><StandardsIcon /><Grow>Items</Grow><Chevrons /></Accordion>
                <ExplorerList />
              </ExplorerBody>
            </Panel>
            <ViewWin>
              <ViewTitle>
                <Ico $s={6}><rect x=".5" y=".5" width="5" height="5" fill="#444" /></Ico>
                View 1, Default
                <ViewButtons>
                  <WinBtn><Ico $s={7} $h={3}><path d="M1 1.500h5" stroke="#fff" /></Ico></WinBtn>
                  <WinBtn><Ico $s={7}><path d="M1 3h4v3H1zM3 3V1h3v3" fill="none" stroke="#fff" strokeWidth=".8" /></Ico></WinBtn>
                  <WinBtn $red><Ico $s={7}><path d="M1 1l5 5M6 1L1 6" stroke="#fff" strokeWidth="1.200" /></Ico></WinBtn>
                </ViewButtons>
              </ViewTitle>
              <ViewTools>
                <VT i={0} /><Caret />
                <VT i={1} ml={4} /><VT i={2} /><Caret />
                <ToolSep />
                <VT i={3} /><Caret />
                <VT i={4} ml={2} /><VT i={5} /><VT i={6} /><VT i={7} /><VT i={8} /><VT i={9} /><VT i={10} />
                <ToolSep />
                <VT i={11} /><VT i={12} />
                <ToolSep />
                <VT i={13} /><VT i={14} /><VT i={15} />
              </ViewTools>
              <Canvas>
                <CanvasLayer viewBox="438 122 802 560">
                  <path d="M623.500 210.500H664M644 190v41" stroke="#e8e8e8" strokeWidth="1.100" />
                  <circle cx="682.500" cy="215.500" r="3" fill="#555" stroke="#ddd" strokeWidth="1.200" />
                  <polyline points={LEFT_RAW} fill="none" stroke="#f0f0f0" strokeWidth=".8" />
                  <polyline points={ARC} fill="none" stroke="#d8923f" strokeWidth="1.200" />
                  <polyline points={MID_RAW} fill="none" stroke="#e2e2e2" strokeWidth=".9" />
                  <polyline points={RIGHT_RAW} fill="none" stroke="#f0dede" strokeWidth=".7" />
                  <polyline points={TAIL} fill="none" stroke="#e2e2e2" strokeWidth=".9" />
                  <polyline points={RED_LEFT} fill="none" stroke="#b30f2c" strokeWidth="1.800" />
                  <polyline points={RED_RIGHT} fill="none" stroke="#b30f2c" strokeWidth="1.800" />
                  <path d="M862 260h5M864.500 257.500v5" stroke="#d8923f" />
                </CanvasLayer>
              </Canvas>
            </ViewWin>
          </Main>

          <BottomBar>
            <BottomStrip>
              <BackIcon c="#57b33e" />
              <Caret $mx={4} />
              <BackIcon c="#b3b3b3" flip />
              <Caret $mx={4} />
              <StackIcon />
              <Caret $mx={2} />
              <ModelSelect>
                <ModelsIcon />
                <Grow>Default</Grow>
                <Caret $c="#222" />
              </ModelSelect>
              <ModelsIcon />
              <StripSep />
              {[1, 2, 3, 4, 5, 6, 7, 8].map((n) => (
                <ViewNumber key={n} $on={n === 1}>{n}</ViewNumber>
              ))}
              <StripSep />
              <SnapBtn $on $w={18}><Snap i={0} /></SnapBtn>
              <SnapBtn $ml={3}><Snap i={1} /></SnapBtn>
              <SnapBtn $on><Snap i={2} /></SnapBtn>
              <SnapBtn><Snap i={3} /></SnapBtn>
              <SnapBtn><Snap i={4} /></SnapBtn>
              <SnapBtn><Snap i={5} /></SnapBtn>
              <SnapBtn><Snap i={6} /></SnapBtn>
              <SnapBtn><Snap i={7} /></SnapBtn>
              <SnapBtn><Snap i={8} /></SnapBtn>
              <SnapBtn><Snap i={9} /></SnapBtn>
              <SnapBtn $w={25}><Snap i={10} /></SnapBtn>
            </BottomStrip>
          </BottomBar>

          <StatusBar>
            <StatusMsg>Geometry Connector &gt; Identify element</StatusMsg>
            <StatusPrompt />
            <StatusCells>
              <StatusCell $w={18}>
                <Ico $s={11}><path d="M1 10c5 0 6-3 9-8" fill="none" stroke="#3c78b5" /></Ico>
              </StatusCell>
              <StatusCell $w={19}>
                <Ico $s={11}><rect x="1.500" y="5" width="8" height="5" fill="#a5b94a" /><path d="M3.500 5V3c0-2 4-2 4 0v2" fill="none" stroke="#777" /></Ico>
              </StatusCell>
              <StatusCell $w={83}>Default</StatusCell>
              <StatusCell $w={73} />
              <StatusCell $w={20} />
              <StatusCell $w={19} />
              <StatusCell $w={18} />
              <StatusCell $w={19}>
                <Ico $s={11}><path d="M2 1h8L8.500 3v7H1V3z" fill="none" stroke="#888" /></Ico>
              </StatusCell>
              <StatusCell $w={19}>
                <Ico $s={11}><path d="M5.500 1L10 5.500H8.500V10h-6V5.500H1z" fill="#e0a83a" /></Ico>
              </StatusCell>
              <StatusCell $w={19}>
                <Ico $s={11}><rect x="2" y="1" width="7" height="9" fill="#1b6fc0" /><path d="M1 3h2M1 6h2M1 9h2" stroke="#0d3c70" /></Ico>
              </StatusCell>
              <StatusCell $w={18} />
              <StatusCell $w={19}>
                <Ico $s={11}><rect x="2.500" y="1.500" width="6" height="8" rx="1" fill="none" stroke="#999" /><rect x="4" y="4" width="3" height="3" fill="#aaa" /></Ico>
              </StatusCell>
              <StatusCell $w={21}>
                <Ico $s={12}><circle cx="5.500" cy="5.500" r="4.500" fill="#2f8fd0" /><path d="M5 9l2 2 4-5" stroke="#5bb04a" strokeWidth="1.500" fill="none" /></Ico>
              </StatusCell>
            </StatusCells>
          </StatusBar>
        </AppWindow>

        <Dialog>
          <DialogTitle>
            <AppLogo />
            <Grow>Geometry Connector</Grow>
            <DialogWinBtn>–</DialogWinBtn>
            <DialogWinBtn $gap={48}>✕</DialogWinBtn>
          </DialogTitle>
          <SectionHead $h={16}>Begin Element</SectionHead>
          <FieldGrid $h={40} $top={6}>
            <FieldLabel>Length</FieldLabel>
            <Check><CheckBox />Free</Check>
            <RightCol>
              <SelectBtn $focus>Select Element</SelectBtn>
              <Check><CheckBox />Replace</Check>
            </RightCol>
          </FieldGrid>
          <ToolBand>
            <Ico $s={12}><Dim><path d="M1 4l3-3 2 3-2 3 3 3" /><circle cx="9" cy="9" r="1.800" /></Dim></Ico>
            <Ico $s={14} $ml={4}><Dim><path d="M1 10c2-9 4-9 6-2s4 0 6-5" /></Dim></Ico>
            <Ico $s={14} $ml={5}><path d="M2 12L11 2l2 2-9 10z" fill="#d2d2d2" /></Ico>
            <Grow />
            <Ico $s={16}><Dim><rect x="1" y="1" width="14" height="14" /><path d="M1 8h7v7M9 7l5-5M11 2h3v3" /></Dim></Ico>
            <Ico $s={14} $ml={7}><Dim><path d="M2 12L12 2" /><circle cx="2.500" cy="11.500" r="1" /></Dim></Ico>
            <Ico $s={14} $ml={2}><Dim><path d="M2 13C3 7 7 3 12 2" /></Dim></Ico>
            <Ico $s={15} $ml={3}><Dim><circle cx="7.500" cy="7.500" r="6" /><circle cx="7.500" cy="7.500" r="3.500" /><path d="M7.500 7.500h6" /></Dim></Ico>
            <Ico $s={10} $h={15} $ml={6}><path d="M1 1v12l3-3 2 4 2-1-2-4h4z" fill="#777" /></Ico>
          </ToolBand>
          <ListArea>
            <SideIcons>
              <Ico $s={8} $h={6}><path d="M1 3h6" stroke="#cfcfcf" strokeDasharray="1 1" /></Ico>
              <Ico $s={8} $h={4}><path d="M0 2h8" stroke="#c9c9c9" strokeWidth="2" /></Ico>
              <Ico $s={8} $h={5}><path d="M1 4l3-3 3 3" fill="none" stroke="#bbb" /></Ico>
              <Ico $s={8}><rect x=".5" y=".5" width="7" height="7" fill="#d6d6d6" /></Ico>
              <Ico $s={8} $h={5}><path d="M1 1l3 3 3-3" fill="none" stroke="#bbb" /></Ico>
              <Ico $s={8}><path d="M1 1l6 6M7 1L1 7" stroke="#bbb" /></Ico>
              <Ico $s={8}><rect x=".5" y=".5" width="7" height="7" fill="none" stroke="#bbb" /><path d="M1 1l6 6M7 1L1 7" stroke="#bbb" /></Ico>
            </SideIcons>
          </ListArea>
          <SectionHead $h={18} $band>
            End Element
            <HeadIcons>
              <Ico $s={14}><Dim><path d="M6 2C2 4 2 9 5 12M8 12c4-2 4-7 1-10" strokeWidth="1.500" /></Dim></Ico>
              <Ico $s={14}><Dim><path d="M1 12L12 3M4 13L13 6M2 5l11-3" /></Dim></Ico>
            </HeadIcons>
          </SectionHead>
          <FieldGrid $h={54} $top={10}>
            <FieldLabel>Length</FieldLabel>
            <Check><CheckBox $on>✓</CheckBox>Free</Check>
            <RightCol>
              <SelectBtn>Select Element</SelectBtn>
              <Check><CheckBox />Replace</Check>
              <ActionRow>
                <GhostBtn>Compute</GhostBtn>
                <GhostBtn>Apply</GhostBtn>
              </ActionRow>
            </RightCol>
          </FieldGrid>
          <DialogStatus>No alignment elements generated</DialogStatus>
        </Dialog>

        <TaskPreview>
          <Ico $s={12}><path d="M2 10L7 2l3 3-2 5z" fill="#888" /><path d="M3 11h7" stroke="#888" /></Ico>
          <Grow>Geometry Connector</Grow>
          <DialogWinBtn>–</DialogWinBtn>
          <DialogWinBtn $gap={17}><Ico $s={8}><rect x="1" y="1" width="6" height="6" fill="none" stroke="#ddd" /></Ico></DialogWinBtn>
          <DialogWinBtn $gap={18}>✕</DialogWinBtn>
        </TaskPreview>
      </Screen>
    </>
  );
}
